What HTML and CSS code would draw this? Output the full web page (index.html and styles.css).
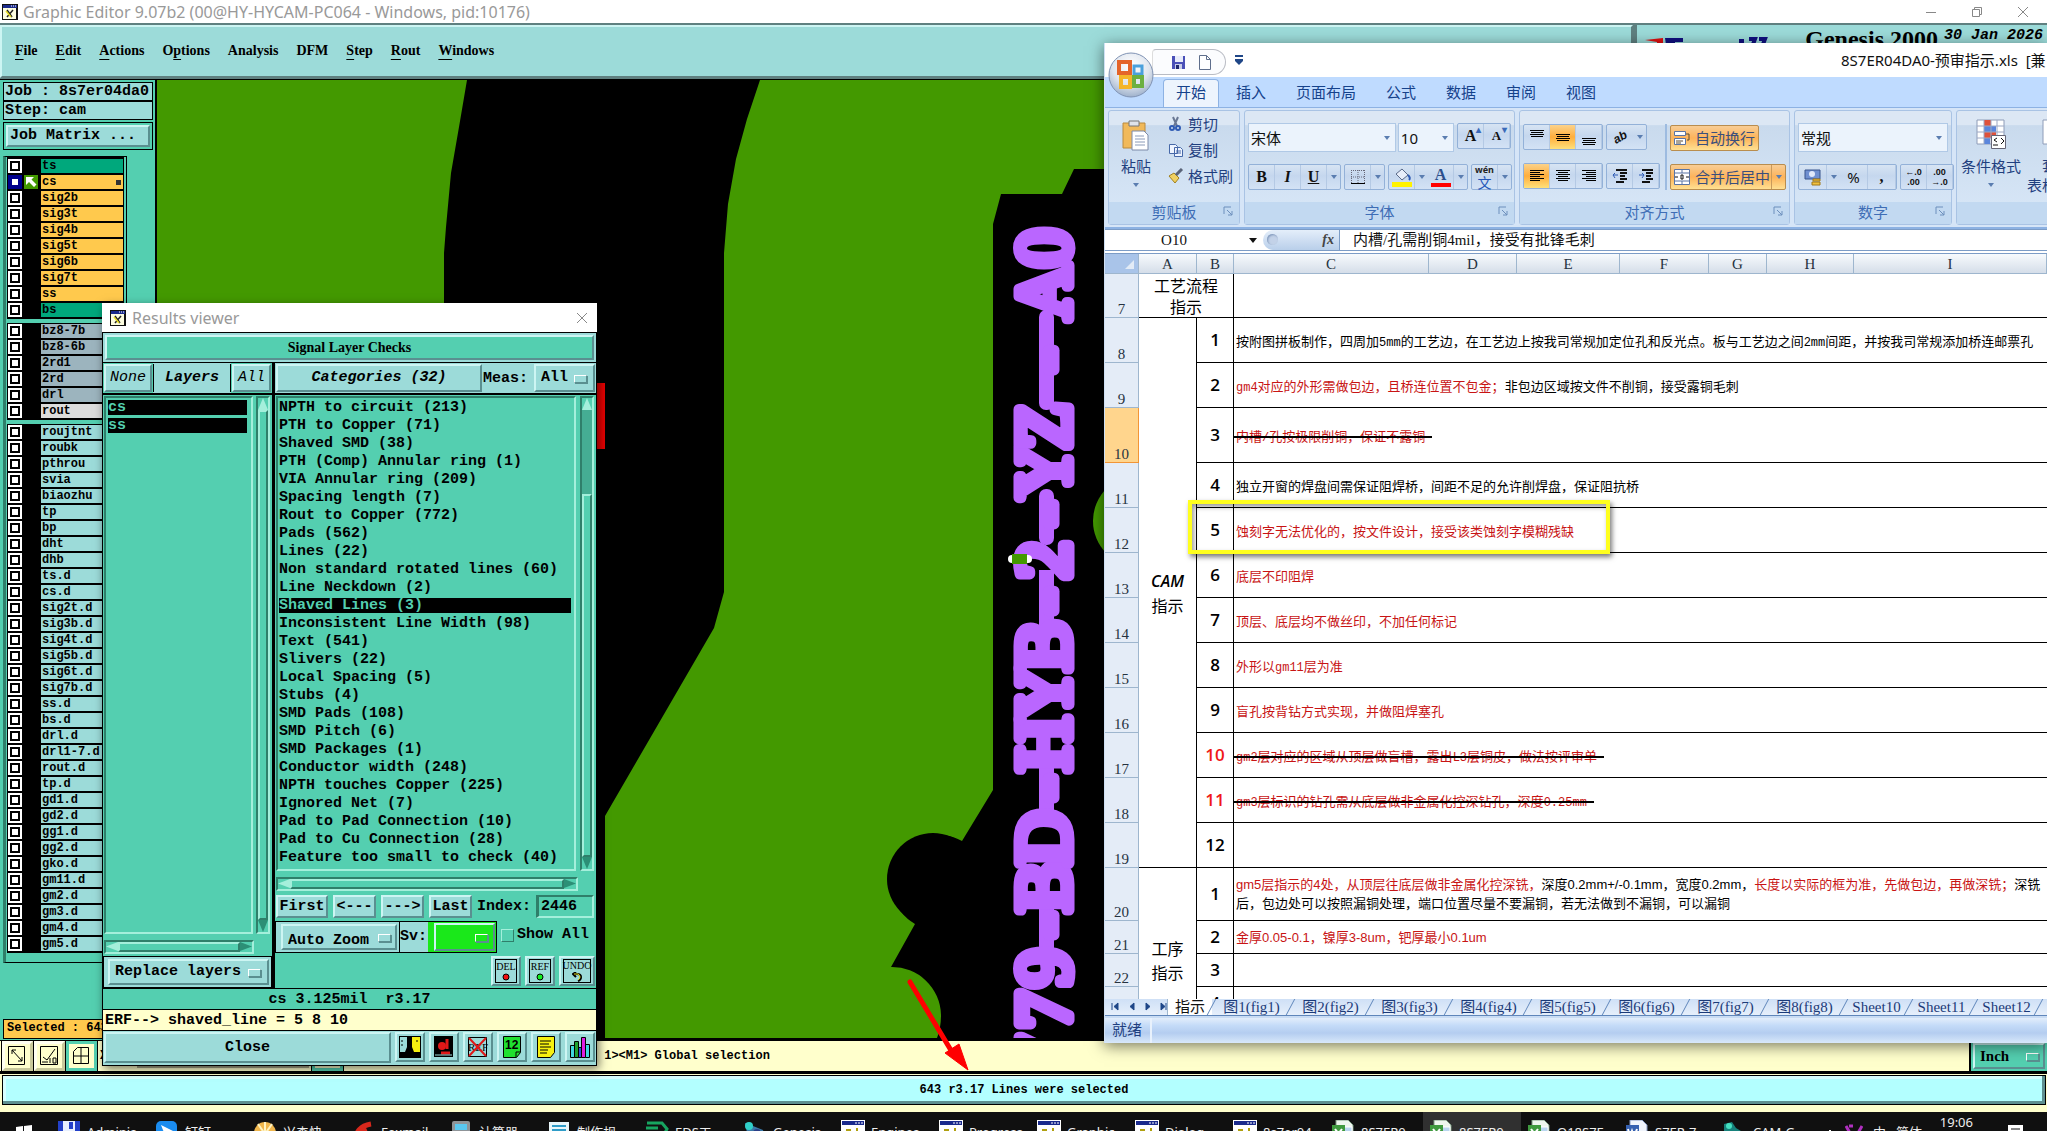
FILE: index.html
```html
<!DOCTYPE html>
<html lang="zh-CN">
<head>
<meta charset="utf-8">
<title>Graphic Editor</title>
<link rel="stylesheet" href="styles.css">
</head>
<body>
<svg width="0" height="0" class="defs">
  <symbol id="x11" viewBox="0 0 16 16"><rect width="16" height="16" fill="#111"/><rect x="1" y="1" width="14" height="3" fill="#1a2a8c"/><path d="M9 2h1M11 2h1M13 2h1" stroke="#fff"/><rect x="1" y="4" width="13" height="11" fill="#fdfde0"/><path d="M5 6l5 7M11 6l-6 7" stroke="#222" stroke-width="1.500"/><path d="M4 7l5 6" stroke="#e6dc20" stroke-width="1.500"/></symbol>
  <symbol id="pl" viewBox="0 0 24 24"><rect width="24" height="24" fill="#fff"/><rect x="1" y="1" width="22" height="4" fill="#1a2a8c"/><path d="M14 3h2M17 3h2M20 3h2" stroke="#fff"/><path d="M6 17V10h3v4H6M16 8v9" stroke="#b0a010" stroke-width="2" fill="none"/></symbol>
  <symbol id="xl" viewBox="0 0 24 24"><path d="M5 0h12l5 5v19H5z" fill="#eef6ee" stroke="#7a9a80"/><rect x="12" y="7" width="9" height="14" fill="#b9d6ef" stroke="#fff"/><rect x="1" y="5" width="13" height="16" fill="#3f9a3f"/><path d="M4 9l7 9M11 9l-7 9" stroke="#fff" stroke-width="2"/></symbol>
  <symbol id="launch" viewBox="0 0 12 12"><path d="M1 8V1h7" stroke="#6d8fbc" fill="none"/><path d="M4 4l5 5M9 5v4H5" stroke="#6d8fbc" fill="none"/></symbol>
  <symbol id="ll" viewBox="0 0 14 12"><path d="M0 .5h14M0 2.500h10M0 4.500h14M0 6.500h10M0 8.500h14M0 10.500h10" stroke="#000"/></symbol>
  <symbol id="lc" viewBox="0 0 14 12"><path d="M0 .5h14M2 2.500h10M0 4.500h14M2 6.500h10M0 8.500h14M2 10.500h10" stroke="#000"/></symbol>
  <symbol id="lr" viewBox="0 0 14 12"><path d="M0 .5h14M4 2.500h10M0 4.500h14M4 6.500h10M0 8.500h14M4 10.500h10" stroke="#000"/></symbol>
  <symbol id="lv" viewBox="0 0 14 7"><path d="M0 .5h14M1 2.500h12M0 4.500h14M1 6.500h12" stroke="#000"/></symbol>
</svg>
<div class="desk">
  <header class="titlebar">
    <svg class="i16"><use href="#x11"/></svg>
    <h1>Graphic Editor 9.07b2 (00@HY-HYCAM-PC064 - Windows, pid:10176)</h1>
    <div class="winbtns">
      <button aria-label="Minimize"><svg width="12" height="12"><path d="M1 6.500h10" stroke="#888"/></svg></button>
      <button aria-label="Restore"><svg width="12" height="12"><path d="M1.500 3.500h7v7h-7zM3.500 3V1.500h7v7H9" stroke="#888" fill="none"/></svg></button>
      <button aria-label="Close"><svg width="12" height="12"><path d="M1 1l10 10M11 1L1 11" stroke="#888"/></svg></button>
    </div>
  </header>

  <div class="menurow">
    <nav class="menubar">
      <button><u>F</u>ile</button><button><u>E</u>dit</button><button><u>A</u>ctions</button><button>O<u>p</u>tions</button><button>Analysis</button><button>DFM</button><button><u>S</u>tep</button><button><u>R</u>out</button><button><u>W</u>indows</button>
    </nav>
    <div class="brand">
      <svg width="130" height="30"><path d="M4 15l18-2v10h-6v-6z" fill="#e01010"/><path d="M24 13h18v4h-8v10h-8z" fill="#101080"/><path d="M98 16h5M108 14h6l-3 8M118 14h6l-3 8" stroke="#101080" stroke-width="4" fill="none"/></svg>
      <b>Genesis 2000</b><i>30 Jan 2026</i>
    </div>
  </div>

  <div class="main">
    <aside class="side">
      <div class="jobbox">Job : 8s7er04da0</div>
      <div class="jobbox">Step: cam</div>
      <div class="matrix"><button class="mbtn">Job Matrix ...</button></div>
      <div class="layers">
        <div class="lgroup">
          <label class="lr green"><input type="checkbox"><span>ts</span></label>
          <label class="lr gold work"><input type="checkbox" checked><svg width="14" height="14"><rect width="14" height="14" fill="#439900"/><path d="M2 2h8L7.500 4.500l5 5-2.500 2.500-5-5L2 10z" fill="#fff"/></svg><span>cs<em></em></span></label>
          <label class="lr gold"><input type="checkbox"><span>sig2b</span></label>
          <label class="lr gold"><input type="checkbox"><span>sig3t</span></label>
          <label class="lr gold"><input type="checkbox"><span>sig4b</span></label>
          <label class="lr gold"><input type="checkbox"><span>sig5t</span></label>
          <label class="lr gold"><input type="checkbox"><span>sig6b</span></label>
          <label class="lr gold"><input type="checkbox"><span>sig7t</span></label>
          <label class="lr gold"><input type="checkbox"><span>ss</span></label>
          <label class="lr green"><input type="checkbox"><span>bs</span></label>
        </div>
        <div class="lgroup">
          <label class="lr gray"><input type="checkbox"><span>bz8-7b</span></label>
          <label class="lr gray"><input type="checkbox"><span>bz8-6b</span></label>
          <label class="lr gray"><input type="checkbox"><span>2rd1</span></label>
          <label class="lr gray"><input type="checkbox"><span>2rd</span></label>
          <label class="lr gray"><input type="checkbox"><span>drl</span></label>
          <label class="lr pale"><input type="checkbox"><span>rout</span></label>
        </div>
        <div class="lgroup">
          <label class="lr"><input type="checkbox"><span>roujtnt</span></label>
          <label class="lr"><input type="checkbox"><span>roubk</span></label>
          <label class="lr"><input type="checkbox"><span>pthrou</span></label>
          <label class="lr"><input type="checkbox"><span>svia</span></label>
          <label class="lr"><input type="checkbox"><span>biaozhu</span></label>
          <label class="lr"><input type="checkbox"><span>tp</span></label>
          <label class="lr"><input type="checkbox"><span>bp</span></label>
          <label class="lr"><input type="checkbox"><span>dht</span></label>
          <label class="lr"><input type="checkbox"><span>dhb</span></label>
          <label class="lr"><input type="checkbox"><span>ts.d</span></label>
          <label class="lr"><input type="checkbox"><span>cs.d</span></label>
          <label class="lr"><input type="checkbox"><span>sig2t.d</span></label>
          <label class="lr"><input type="checkbox"><span>sig3b.d</span></label>
          <label class="lr"><input type="checkbox"><span>sig4t.d</span></label>
          <label class="lr"><input type="checkbox"><span>sig5b.d</span></label>
          <label class="lr"><input type="checkbox"><span>sig6t.d</span></label>
          <label class="lr"><input type="checkbox"><span>sig7b.d</span></label>
          <label class="lr"><input type="checkbox"><span>ss.d</span></label>
          <label class="lr"><input type="checkbox"><span>bs.d</span></label>
          <label class="lr"><input type="checkbox"><span>drl.d</span></label>
          <label class="lr"><input type="checkbox"><span>drl1-7.d</span></label>
          <label class="lr"><input type="checkbox"><span>rout.d</span></label>
          <label class="lr"><input type="checkbox"><span>tp.d</span></label>
          <label class="lr"><input type="checkbox"><span>gd1.d</span></label>
          <label class="lr"><input type="checkbox"><span>gd2.d</span></label>
          <label class="lr"><input type="checkbox"><span>gg1.d</span></label>
          <label class="lr"><input type="checkbox"><span>gg2.d</span></label>
          <label class="lr"><input type="checkbox"><span>gko.d</span></label>
          <label class="lr"><input type="checkbox"><span>gm11.d</span></label>
          <label class="lr"><input type="checkbox"><span>gm2.d</span></label>
          <label class="lr"><input type="checkbox"><span>gm3.d</span></label>
          <label class="lr"><input type="checkbox"><span>gm4.d</span></label>
          <label class="lr"><input type="checkbox"><span>gm5.d</span></label>
        </div>
      </div>
      <div class="selcount">Selected : 643</div>
    </aside>
    <div class="canvas">
      <svg width="1890" height="958" viewBox="157 80 1890 958">
        <path d="M157 80H467L459 127 451 173 446 227 444 253V700H157z" fill="#439900"/>
        <rect x="590" y="383" width="15" height="66" fill="#e80000"/>
        <path d="M760 80L747 119 736 159 728 204 724 253V592L714 628 605 816V1038H937Q941 1028 941 1015A49 49 0 0 0 891 967L915 924A46 46 0 1 1 962 841L993 790V224L1001 194H1062L1074 169H1200V80z" fill="#439900"/>
        <circle cx="933" cy="879" r="46"/>
        <circle cx="1139" cy="521" r="46" fill="#439900"/>
        <g fill="#ba66ff"><rect x="1039" y="310" width="15" height="100" rx="7"/><rect x="1039" y="489" width="15" height="56" rx="7"/><rect x="1039" y="570" width="15" height="60"/><rect x="1039" y="762" width="15" height="55"/><rect x="1039" y="900" width="15" height="50"/></g>
        <text class="etch" transform="translate(1069 1038) rotate(-90)" x="-16 28 70 113 151 200 250 294 345 392 437 478 524 567 612 678 746 790">779-BD-HYB-2-YZ-A0</text>
        <rect x="1008" y="555" width="24" height="8" rx="4" fill="#fff"/><rect x="1012" y="554" width="15" height="10" fill="#439900"/>
      </svg>
    </div>
  </div>

  <div class="cmdbar">
    <button class="tool"><svg width="22" height="22"><path d="M1.500 1.500h16v18h-16zM5 5l10 11M5 9V5h4M15 12v4h-4" fill="none" stroke="#000"/></svg></button>
    <button class="tool"><svg width="22" height="22"><path d="M1.500 1.500h17v18h-17zM4 12l4 3L16 4M3 17h6M11 13v5M14 13h3v5h-3z" fill="none" stroke="#000"/></svg></button>
    <button class="tool on"><svg width="22" height="22"><path d="M2.500 6.500l4-4h11v16h-15zM2 11h16M10 2v17" fill="none" stroke="#000"/></svg></button>
    <label class="xy">X <input aria-label="X Y"></label>
    <button class="tool on wide" aria-label="Grid"></button>
    <span class="hint">1&gt;&lt;M1&gt; Global selection</span>
    <span class="opt inch"><select aria-label="Units"><option>Inch</option></select></span>
  </div>
  <div class="status"><p>643 r3.17 Lines were selected</p></div>

  <footer class="taskbar"><div class="tasks">
    <button class="start" aria-label="Start"><svg width="18" height="18"><path d="M1 4l7-1v6H1zM9 3l8-1v7H9zM1 10h7v6l-7-1zM9 10h8v7l-8-1z" fill="#fff"/></svg></button>
    <button><svg width="24" height="24"><path d="M1 1h22v22H1z" fill="#2340c8"/><path d="M6 1h12v10H6z" fill="#e8f0ff"/><path d="M12 2h4v7h-4z" fill="#2340c8"/></svg>Adminis</button>
    <button><svg width="24" height="24"><rect x="1" y="1" width="21" height="22" rx="5" fill="#1a8cf0"/><path d="M6 5l12 6-5 8-3-4z" fill="#fff"/></svg>钉钉</button>
    <button><svg width="24" height="24"><circle cx="12" cy="13" r="11" fill="#f0b64c"/><path d="M12 14L5 4M12 14V2M12 14l7-10" stroke="#fff3c0" stroke-width="2"/></svg>兴森快</button>
    <button><svg width="24" height="24"><path d="M2 22c4-10 6-16 18-18M6 14l10-4" stroke="#d8281c" stroke-width="5" fill="none"/></svg>Foxmail</button>
    <button><svg width="24" height="24"><rect x="3" y="1" width="18" height="22" rx="2" fill="#8f9498"/><rect x="6" y="4" width="12" height="6" fill="#5ac8f0"/><path d="M6 13h12M6 17h12" stroke="#fff" stroke-width="2" stroke-dasharray="3 2"/></svg>计算器</button>
    <button><svg width="24" height="24"><path d="M2 2h20v21H2z" fill="#e8f6fa"/><path d="M5 6h14M5 10h14M5 14h14" stroke="#2f9cc8" stroke-width="2"/></svg>制作规</button>
    <button><svg width="24" height="24"><path d="M2 3h15l5 6-4 7H7M1 8h12M5 13h8" stroke="#17a560" stroke-width="3" fill="none"/></svg>EDS工</button>
    <button><svg width="24" height="24"><path d="M2 3l8 3 10 4 3 12H6z" fill="#3b7aa8"/><circle cx="6" cy="6" r="4" fill="#30d0c8"/><circle cx="14" cy="13" r="4" fill="#2c3f88"/></svg>Genesis</button>
    <button><svg class="i24"><use href="#pl"/></svg>Engines</button>
    <button><svg class="i24"><use href="#pl"/></svg>Progress</button>
    <button><svg class="i24"><use href="#pl"/></svg>Graphic</button>
    <button><svg class="i24"><use href="#pl"/></svg>Dialog</button>
    <button><svg class="i24"><use href="#pl"/></svg>8s7er04</button>
    <button><svg class="i24"><use href="#xl"/></svg>8S7ER0</button>
    <button class="cur"><svg class="i24"><use href="#xl"/></svg>8S7ER0</button>
    <button><svg class="i24"><use href="#xl"/></svg>Q18S7E</button>
    <button><svg width="24" height="24"><path d="M5 0h12l5 5v19H5z" fill="#f0f4fc" stroke="#8296c0"/><rect x="1" y="5" width="13" height="16" fill="#3560b0"/><path d="M3 9l2 8 2-6 2 6 3-8" stroke="#fff" fill="none" stroke-width="2"/></svg>S7ER-7</button>
    <button><svg width="24" height="24"><path d="M1 4l8-2 4 6 10 6-2 9H6L1 12z" fill="#17827c"/><circle cx="6" cy="6" r="3" fill="#44e0c0"/></svg>CAM-G</button>
    <div class="tray"><svg width="10" height="8"><path d="M1 6l4-4 4 4" stroke="#fff" fill="none"/></svg><svg width="18" height="18"><path d="M1 3l8 14 8-14M4 3h4" stroke="#b030c0" stroke-width="3" fill="none"/></svg><span>中</span><span>简体</span></div>
    <time>19:06</time>
    <svg class="note" width="18" height="18"><path d="M1 2h15v13H1z" fill="#fff"/><path d="M4 6h9M4 9h9" stroke="#111"/></svg>
  </div></footer>

  <section class="results">
    <header><svg class="i16"><use href="#x11"/></svg><h2>Results viewer</h2><button aria-label="Close window"><svg width="12" height="12"><path d="M1 1l10 10M11 1L1 11" stroke="#888"/></svg></button></header>
    <div class="rbody">
      <div class="banner"><button class="mbtn teal">Signal Layer Checks</button></div>
      <div class="cols">
        <div class="colL">
          <div class="hd"><button class="mbtn it">None</button><b>Layers</b><button class="mbtn it">All</button></div>
          <div class="scroll">
            <ul class="list"><li class="sel">cs</li><li class="sel">ss</li></ul>
            <div class="vs"><i class="up"></i><i class="bar"></i><i class="dn"></i></div>
          </div>
          <div class="hs"><i class="lf"></i><i class="bar"></i><i class="rt"></i></div>
          <div class="rep"><span class="opt"><select aria-label="Replace layers"><option>Replace layers</option></select></span></div>
        </div>
        <div class="colR">
          <div class="hd"><button class="mbtn cat">Categories (32)</button><label for="meas">Meas:</label><span class="opt"><select id="meas"><option>All</option></select></span></div>
          <div class="scroll">
            <ul class="list"><li>NPTH to circuit (213)</li><li>PTH to Copper (71)</li><li>Shaved SMD (38)</li><li>PTH (Comp) Annular ring (1)</li><li>VIA Annular ring (209)</li><li>Spacing length (7)</li><li>Rout to Copper (772)</li><li>Pads (562)</li><li>Lines (22)</li><li>Non standard rotated lines (60)</li><li>Line Neckdown (2)</li><li class="sel">Shaved Lines (3)</li><li>Inconsistent Line Width (98)</li><li>Text (541)</li><li>Slivers (22)</li><li>Local Spacing (5)</li><li>Stubs (4)</li><li>SMD Pads (108)</li><li>SMD Pitch (6)</li><li>SMD Packages (1)</li><li>Conductor width (248)</li><li>NPTH touches Copper (225)</li><li>Ignored Net (7)</li><li>Pad to Pad Connection (10)</li><li>Pad to Cu Connection (28)</li><li>Feature too small to check (40)</li></ul>
            <div class="vs"><i class="up"></i><i class="gapbar"></i><i class="bar"></i><i class="dn"></i></div>
          </div>
          <div class="hs"><i class="lf"></i><i class="bar"></i><i class="rt"></i></div>
          <div class="navrow"><button class="mbtn">First</button><button class="mbtn">&lt;---</button><button class="mbtn">---&gt;</button><button class="mbtn">Last</button><label for="idx">Index:</label><input id="idx" value="2446"></div>
          <div class="zoomrow"><span class="opt az"><select aria-label="Zoom mode"><option>Auto Zoom</option></select></span><label for="sv">Sv:</label><span class="opt sv"><select id="sv"><option></option></select></span><label class="show"><input type="checkbox">Show All</label></div>
          <div class="undo">
            <button class="mbtn ic"><span>DEL</span><svg width="8" height="8"><circle cx="4" cy="4" r="3" fill="#f01010" stroke="#000"/></svg></button>
            <button class="mbtn ic"><span>REF</span><svg width="8" height="8"><circle cx="4" cy="4" r="3" fill="#10f020" stroke="#000"/></svg></button>
            <button class="mbtn ic"><span>UNDO</span><svg width="10" height="10"><path d="M1 2h4q4 0 4 3t-3 4M4 0L1 2l3 3" stroke="#000" stroke-width="2" fill="none"/><path d="M2 2h4q2 1 2 3t-2 3" stroke="#e8e020" fill="none"/></svg></button>
          </div>
        </div>
      </div>
      <p class="info">cs 3.125mil&nbsp; r3.17</p>
      <p class="erf">ERF--&gt; shaved_line = 5 8 10</p>
      <div class="foot">
        <button class="mbtn close">Close</button>
        <button class="mbtn ic"><svg width="22" height="24"><path d="M0 1h22v22H0z"/><path d="M1 2h7v10l-2 5H1z" fill="#9cdbd9"/><path d="M13 2h8v15h-6l-2-5z" fill="#f6f010"/><path d="M3 5v2M3 9v2M18 5v2" stroke="#000"/></svg></button>
        <button class="mbtn ic"><svg width="22" height="24"><path d="M1 1h19v21H1z"/><path d="M14 4v10M8 18h9" stroke="#e01818" stroke-width="3"/><circle cx="9" cy="11" r="4" fill="#e01818"/><path d="M2 20h17" stroke="#9cdbd9"/></svg></button>
        <button class="mbtn ic"><span>REF</span><svg class="over" width="22" height="24"><path d="M1.500 2.500h18v19h-18z" stroke="#000" fill="none"/><path d="M2 3l17 18M19 3L2 21" stroke="#e01818" stroke-width="2"/></svg></button>
        <button class="mbtn ic"><svg width="22" height="24"><path d="M2.500 1.500h17v16l-4 5h-13z" fill="#20e030" stroke="#000"/><path d="M19 17h-4v5" fill="none" stroke="#000"/></svg><span class="over num">12</span></button>
        <button class="mbtn ic"><svg width="22" height="24"><path d="M2.500 1.500h17v16l-4 5h-13z" fill="#f6f010" stroke="#000"/><path d="M5 6h11M5 9h9M5 12h11M5 15h8M5 18h7" stroke="#000"/></svg></button>
        <button class="mbtn ic"><svg width="22" height="24"><path d="M1.500 10.500h4v12h-4z" fill="#40d8e0" stroke="#000"/><path d="M5.500 6.500h4v16h-4z" fill="#20a030" stroke="#000"/><path d="M9.500 12.500h4v10h-4z" fill="#3050e0" stroke="#000"/><path d="M12.500 2.500h4v20h-4z" fill="#e020e0" stroke="#000"/><path d="M16.500 9.500h4v13h-4z" fill="#40d8e0" stroke="#000"/></svg></button>
      </div>
    </div>
  </section>

  <section class="excel">
    <header class="xt">
      <button class="orb" aria-label="Office"><svg width="48" height="48"><defs><radialGradient id="og" cx=".5" cy=".3" r=".7"><stop offset="0" stop-color="#fff"/><stop offset=".6" stop-color="#dfe5ee"/><stop offset="1" stop-color="#9fb2cc"/></radialGradient></defs><circle cx="24" cy="24" r="22" fill="url(#og)" stroke="#8093b4"/><path d="M12 11h11v11H12z" fill="none" stroke="#e4642a" stroke-width="4"/><path d="M27 15h8v8h-8z" fill="none" stroke="#4aa0dc" stroke-width="3"/><path d="M14 26h9v10h-9z" fill="none" stroke="#f4b52a" stroke-width="4"/><path d="M27 26h8v9h-8z" fill="none" stroke="#6cb040" stroke-width="4"/></svg></button>
      <div class="qat"><button aria-label="Save"><svg width="15" height="15"><path d="M1 1h13v13H1z" fill="#4a50b8"/><path d="M4 1h8v6H4z" fill="#e8ecfa"/><path d="M4 9h7v5H4z" fill="#c8cde8"/><path d="M5 10h3v4H5z" fill="#202870"/></svg></button><button aria-label="New"><svg width="15" height="15"><path d="M2.500.5h7l4 4v10h-11z" fill="#fdfeff" stroke="#5e6e8c"/><path d="M9.500.5v4h4" fill="none" stroke="#5e6e8c"/></svg></button></div>
      <svg width="10" height="12"><path d="M1 2h8" stroke="#1f4687" stroke-width="2"/><path d="M1 5h8v2L5 11 1 7z" fill="#1f4687"/></svg>
      <h2>8S7ER04DA0-预审指示.xls&nbsp; [兼</h2>
    </header>
    <nav class="tabs"><button class="on">开始</button><button>插入</button><button>页面布局</button><button>公式</button><button>数据</button><button>审阅</button><button>视图</button></nav>
    <div class="ribbon">
      <div class="rg g1"><div class="rc">
        <button class="big"><svg width="30" height="32"><path d="M2 4h22v25H2z" fill="#f1b95a" stroke="#b98a3e"/><path d="M8 2h10v5H8z" fill="#dfe3ea" stroke="#777"/><path d="M11 12h12l4 4v15H11z" fill="#fff" stroke="#7c8aa8"/><path d="M14 17h9M14 20h10M14 23h10M14 26h10" stroke="#8a9ab8"/></svg>粘贴<i class="dd"></i></button>
        <div class="clip">
          <button><svg width="16" height="16"><path d="M5 1l4 9M10 1L6 10" stroke="#6a7894" stroke-width="2"/><circle cx="4" cy="12" r="2" fill="none" stroke="#2f5bb4" stroke-width="2"/><circle cx="10" cy="12" r="2" fill="none" stroke="#2f5bb4" stroke-width="2"/></svg>剪切</button>
          <button><svg width="16" height="16"><path d="M1.500 2.500h6l2 2v7h-8zM6.500 5.500h6l2 2v7h-8z" fill="#eef4ff" stroke="#4668a8"/><path d="M8 9h5M8 11h5" stroke="#4668a8"/></svg>复制</button>
          <button><svg width="16" height="16"><path d="M1 8l5-3 5 5-4 5z" fill="#f0d060" stroke="#a08020"/><path d="M8 7l6-6" stroke="#5a6478" stroke-width="3"/></svg>格式刷</button>
        </div></div><h3>剪贴板<svg class="la"><use href="#launch"/></svg></h3></div>
      <div class="rg g2"><div class="rc col">
        <div class="row"><span class="xs w150"><select aria-label="字体"><option>宋体</option></select></span><span class="xs w56"><select aria-label="字号"><option>10</option></select></span><span class="bg ml"><button class="sf">A<sup>▴</sup></button><button class="sf sm">A<sup>▾</sup></button></span></div>
        <div class="row"><span class="bg"><button class="sf">B</button><button class="sf itl">I</button><button class="sf"><u>U</u></button><i class="dd"></i></span>
          <span class="bg"><button aria-label="边框"><svg width="16" height="16"><path d="M1.500 1v13M8 1v13M14.500 1v13M1 1.500h14M1 8h14" stroke="#667" stroke-dasharray="1 1"/><path d="M1 14.500h14" stroke="#000"/></svg></button><i class="dd"></i></span>
          <span class="bg"><button aria-label="填充颜色"><svg width="20" height="20"><path d="M4 7l6-5 6 6-6 5z" fill="#e8eefa" stroke="#5a6a88"/><path d="M16 8q3 3 1 5" stroke="#2f5bb4" stroke-width="2" fill="none"/><path d="M0 15h20v5H0z" fill="#fff200"/></svg></button><i class="dd"></i><button class="fc" aria-label="字体颜色"><span>A</span></button><i class="dd"></i></span>
          <span class="bg"><button class="wen"><small>wén</small>文</button><i class="dd"></i></span></div>
        </div><h3>字体<svg class="la"><use href="#launch"/></svg></h3></div>
      <div class="rg g3"><div class="rc">
        <div class="al">
          <div class="row"><span class="bg"><button aria-label="顶端对齐"><svg class="lv t"><use href="#lv"/></svg></button><button class="hot" aria-label="垂直居中"><svg class="lv"><use href="#lv"/></svg></button><button aria-label="底端对齐"><svg class="lv b"><use href="#lv"/></svg></button></span><span class="bg"><button class="ab">ab</button><i class="dd"></i></span></div>
          <div class="row"><span class="bg"><button class="hot" aria-label="左对齐"><svg width="14" height="12"><use href="#ll"/></svg></button><button aria-label="居中"><svg width="14" height="12"><use href="#lc"/></svg></button><button aria-label="右对齐"><svg width="14" height="12"><use href="#lr"/></svg></button></span><span class="bg"><button aria-label="减少缩进"><svg width="16" height="14"><path d="M4 1h11M8 4h7M8 7h5M8 10h7M4 13h8" stroke="#111" stroke-width="2"/><path d="M6 6H1M3 4L1 6l2 3" stroke="#2f5bb4" fill="none"/></svg></button><button aria-label="增加缩进"><svg width="16" height="14"><path d="M4 1h11M8 4h7M8 7h5M8 10h7M4 13h8" stroke="#111" stroke-width="2"/><path d="M1 6h5M4 4l2 2-2 3" stroke="#2f5bb4" fill="none"/></svg></button></span></div>
        </div>
        <div class="wm">
          <button class="hb"><svg width="16" height="16"><path d="M.5 1.500h11v4H.5zM.5 8.500h11v6H.5z" fill="#fff" stroke="#5a74a4"/><path d="M2 11h7M2 13h5M12 4h3v6h-2" stroke="#5a4a30" fill="none"/></svg>自动换行</button>
          <span class="hb"><button><svg width="16" height="16"><path d="M.5.5h15v15H.5zM0 4h16M0 12h16M8 0v4M8 12v4" fill="#fff" stroke="#5a74a4"/><path d="M1 8h3M12 8h3M7 6h2v4H7z" stroke="#111" fill="none"/></svg>合并后居中</button><i class="dd"></i></span>
        </div></div><h3>对齐方式<svg class="la"><use href="#launch"/></svg></h3></div>
      <div class="rg g4"><div class="rc col">
        <div class="row"><span class="xs w150"><select aria-label="数字格式"><option>常规</option></select></span></div>
        <div class="row"><span class="bg"><button aria-label="会计格式"><svg width="18" height="18"><path d="M1 2h15v9H1z" fill="#6f8fd0" stroke="#38558c"/><circle cx="8" cy="6" r="3" fill="#dfe8fa"/><path d="M9 11h7v2H9zM8 14h8v3H8z" fill="#f0c040" stroke="#a07818"/></svg></button><i class="dd"></i><button>%</button><button class="sf">,</button></span><span class="bg"><button class="dec">←.0<br>.00</button><button class="dec">.00<br>→.0</button></span></div>
        </div><h3>数字<svg class="la"><use href="#launch"/></svg></h3></div>
      <div class="rg g5"><div class="rc">
        <button class="big"><svg width="30" height="32"><path d="M1 1h27v24H1z" fill="#fff" stroke="#8e9cb8"/><path d="M8 1h7v6H8zM8 13h12v6H8z" fill="#e0513a"/><path d="M8 7h12v6H8zM8 19h6v6H8z" fill="#5b86dc"/><path d="M1 7h27M1 13h27M1 19h27M8 1v24M15 1v24M21 1v24" stroke="#9ca8c4"/><path d="M15.500 16.500h14v13h-14z" fill="#fff" stroke="#667"/><path d="M21 19l-3 2 3 2M17 26h5M25 19l3 3-3 3" stroke="#111" fill="none"/></svg>条件格式<i class="dd"></i></button>
        <button class="big fmt"><svg width="30" height="32"><path d="M1 1h27v24H1z" fill="#fff" stroke="#8e9cb8"/></svg><span>套用<br>表格格式</span></button>
        </div><h3></h3></div>
    </div>
    <div class="fbar"><input class="nb" aria-label="名称框" value="O10"><i class="dd blk"></i><div class="fx"><i class="knob"></i>fx</div><input class="fi" aria-label="编辑栏" value="内槽/孔需削铜4mil，接受有批锋毛刺"></div>
    <div class="grid">
      <table>
        <colgroup><col class="c0"><col class="ca"><col class="cb"><col class="cc"><col class="cd"><col class="ce"><col class="cf"><col class="cg"><col class="ch"><col></colgroup>
        <thead><tr><th class="corner"></th><th>A</th><th>B</th><th>C</th><th>D</th><th>E</th><th>F</th><th>G</th><th>H</th><th>I</th></tr></thead>
        <tbody>
          <tr class="r44"><th>7</th><td colspan="2" class="proc">工艺流程<br>指示</td><td colspan="7"></td></tr>
          <tr class="r45"><th>8</th><td rowspan="12" class="mg"><i>CAM</i><br>指示</td><td class="n">1</td><td colspan="7">按附图拼板制作，四周加<s>5mm</s>的工艺边，在工艺边上按我司常规加定位孔和反光点。板与工艺边之间<s>2mm</s>间距，并按我司常规添加桥连邮票孔</td></tr>
          <tr class="r45"><th>9</th><td class="n">2</td><td colspan="7"><em><s>gm4</s>对应的外形需做包边，且桥连位置不包金；</em>非包边区域按文件不削铜，接受露铜毛刺</td></tr>
          <tr class="r55"><th class="cur">10</th><td class="n">3</td><td colspan="7"><em class="cut">内槽<s>/</s>孔按极限削铜，保证不露铜</em></td></tr>
          <tr class="r45"><th>11</th><td class="n">4</td><td colspan="7">独立开窗的焊盘间需保证阻焊桥，间距不足的允许削焊盘，保证阻抗桥</td></tr>
          <tr class="r45"><th>12</th><td class="n">5</td><td colspan="7"><span class="hl"></span><em>蚀刻字无法优化的，按文件设计，接受该类蚀刻字模糊残缺</em></td></tr>
          <tr class="r45"><th>13</th><td class="n">6</td><td colspan="7"><em>底层不印阻焊</em></td></tr>
          <tr class="r45"><th>14</th><td class="n">7</td><td colspan="7"><em>顶层、底层均不做丝印，不加任何标记</em></td></tr>
          <tr class="r45"><th>15</th><td class="n">8</td><td colspan="7"><em>外形以<s>gm11</s>层为准</em></td></tr>
          <tr class="r45"><th>16</th><td class="n">9</td><td colspan="7"><em>盲孔按背钻方式实现，并做阻焊塞孔</em></td></tr>
          <tr class="r45"><th>17</th><td class="n red">10</td><td colspan="7"><em class="cut"><s>gm2</s>层对应的区域从顶层做盲槽，露出<s>L3</s>层铜皮，做法按评审单</em></td></tr>
          <tr class="r45"><th>18</th><td class="n red">11</td><td colspan="7"><em class="cut"><s>gm3</s>层标识的钻孔需从底层做非金属化控深钻孔，深度<s>0.25mm</s></em></td></tr>
          <tr class="r45"><th>19</th><td class="n">12</td><td colspan="7"></td></tr>
          <tr class="r53"><th>20</th><td rowspan="5" class="mg">工序<br>指示</td><td class="n">1</td><td colspan="7" class="os"><em>gm5层指示的4处，从顶层往底层做非金属化控深铣，</em>深度0.2mm+/-0.1mm，宽度0.2mm，<em>长度以实际的框为准，先做包边，再做深铣；</em>深铣<br>后，包边处可以按照漏铜处理，端口位置尽量不要漏铜，若无法做到不漏铜，可以漏铜</td></tr>
          <tr class="r33"><th>21</th><td class="n">2</td><td colspan="7" class="os"><em>金厚0.05-0.1，镍厚3-8um，钯厚最小0.1um</em></td></tr>
          <tr class="r33"><th>22</th><td class="n">3</td><td colspan="7"></td></tr>
          <tr class="r33"><th>23</th><td class="n">4</td><td colspan="7"></td></tr>
          <tr class="r33"><th>24</th><td class="n"></td><td colspan="7"></td></tr>
        </tbody>
      </table>
    </div>
    <div class="sheets"><span class="nav"><svg width="63" height="14"><path d="M7 4v7M13 4v7l-4-3.500zM29 4v7l-4-3.500zM41 4v7l4-3.500zM56 4v7l4-3.500zM61 4v7" fill="#1f4687" stroke="#1f4687"/></svg></span><a href="#" class="on">指示</a><a href="#" class="fig">图1(fig1)</a><a href="#" class="fig">图2(fig2)</a><a href="#" class="fig">图3(fig3)</a><a href="#" class="fig">图4(fig4)</a><a href="#" class="fig">图5(fig5)</a><a href="#" class="fig">图6(fig6)</a><a href="#" class="fig">图7(fig7)</a><a href="#" class="fig">图8(fig8)</a><a href="#" class="sh">Sheet10</a><a href="#" class="sh">Sheet11</a><a href="#" class="sh">Sheet12</a></div>
    <div class="xstat"><span>就绪</span></div>
  </section>

  <svg class="arrow" width="70" height="100"><path d="M6 6l42 70" stroke="#f00" stroke-width="5" stroke-linecap="round"/><path d="M41 77l14-9 9 26z" fill="#f00" stroke="#f00" stroke-linejoin="round"/></svg>
</div>
</body>
</html>
```
FILE: styles.css
```css
:root{--aqua:#9cdbd9;--hi:#cdf5f3;--lo:#5a8f90;--teal:#54cfb0;--thi:#a4efdb;--tlo:#2f7f6a;--cream:#ffffcc;
--mono:"Liberation Mono","Noto Sans CJK SC",monospace;--ui:"Noto Sans","Noto Sans CJK SC",sans-serif;--song:"Liberation Serif","Noto Sans CJK SC",serif;--blue:#1f3f7f}
*{box-sizing:border-box}
body{margin:0;height:100vh;overflow:hidden;font:bold 15px/18px var(--mono);color:#000}
button,input,select{font:inherit;color:inherit;margin:0;padding:0;border:0;background:none;border-radius:0;appearance:none}
h1,h2,h3,p,ul{margin:0;padding:0}
li{list-style:none}
svg{flex:none;display:block}
.defs{position:absolute}
.i16{width:16px;height:16px}
.i24{width:24px;height:24px}
.desk{position:relative;height:100%;display:flex;flex-direction:column;overflow:hidden;background:#000}
.titlebar{height:23px;background:#fff;display:flex;align-items:center;gap:5px;padding:0 18px 0 2px}
.titlebar h1,.results h2{font:16px/22px var(--ui);color:#999;flex:1}
.winbtns{display:flex;gap:34px}
.menurow{height:57px;display:flex;gap:4px;background:#5f8080;padding:2px 0 1px;border-bottom:1px solid #000}
.menubar{flex:1;background:var(--aqua);border:2px solid;border-color:var(--hi) #5f8080 #5f8080 var(--hi);display:flex;align-items:center;gap:18px;padding:0 0 2px 13px;font:bold 14px/20px "Liberation Serif",serif}
.menubar u{text-underline-offset:4px}
.brand{width:410px;background:var(--aqua);display:flex;padding:0 4px 0 4px}
.brand b{font:bold 24px/28px "Liberation Serif",serif;margin-left:auto;margin-right:6px}
.brand i{line-height:22px}
.main{flex:1;display:flex;min-height:0}
.side{width:157px;background:var(--teal);border-right:2px solid #000;padding:2px 2px 1px 3px;display:flex;flex-direction:column}
.jobbox{height:19px;border:1px solid #000;background:var(--aqua);padding-left:1px;width:150px;line-height:18px;white-space:nowrap}
.matrix{border:1px solid #000;margin:2px 0 6px;width:150px;padding:2px}
.mbtn{background:var(--aqua);border:2px solid;border-color:var(--hi) var(--lo) var(--lo) var(--hi)}
.matrix .mbtn{width:100%;height:22px;text-align:left;padding-left:2px}
.layers{width:124px;border:1px solid #000;border-left:3px solid var(--tlo);padding:0 2px 9px 1px;display:flex;flex-direction:column;gap:4px}
.lgroup{background:#000;padding:1px;display:flex;flex-direction:column}
.lgroup:nth-child(n+2){padding-top:0}
.lr{height:16px;display:grid;grid-template-columns:14px 19px 1fr;font-size:12px;line-height:14px;align-items:center}
.lr input{width:14px;height:14px;background:#fff;border:2px solid #fff;box-shadow:inset 0 0 0 2px #000}
.lr.work input{background:#fff;border-color:#00008c;box-shadow:inset 0 0 0 2px #00008c}
.lr svg{margin-left:2px}
.lr span{grid-column:3;height:14px;background:var(--aqua);padding-left:1px;position:relative}
.green span{background:#00a87c}.gold span{background:#ffc94d}.gray span{background:#9cb4be}.pale span{background:#dcdcdc}
.lr em{position:absolute;right:2px;top:5px;width:5px;height:5px;background:#333}
.selcount{margin-top:auto;height:20px;border:1px solid #000;background:#ffc94d;font-size:12px;line-height:17px;padding-left:3px}
.canvas{flex:1;overflow:hidden;min-width:0;background:#000}
.etch{font:76px "Liberation Serif",serif;text-anchor:middle;fill:#ba66ff;stroke:#ba66ff;stroke-width:11px;stroke-linejoin:round}
.cmdbar{height:34px;background:var(--cream);border-bottom:3px solid #000;border-top:1px solid #000;display:flex;align-items:center;gap:1px;padding-left:2px}
.tool{width:31px;height:30px;border:3px solid;border-color:#fffff0 #c8c89a #c8c89a #fffff0;outline:1px solid #000;display:grid;place-items:center;overflow:hidden}
.tool.on{border-color:var(--teal);background:var(--cream)}
.xy{display:flex;gap:30px;height:30px;align-items:center;padding-left:2px;margin-right:2px;font-size:12px}
.xy input{width:172px;height:24px;border:2px solid #a8a88a;background:var(--cream)}
.hint{font-size:12px;margin-left:260px;flex:1}
.opt{position:relative;display:flex;background:var(--aqua)}
.opt select{width:100%;background:transparent;border:2px solid;border-color:var(--hi) var(--lo) var(--lo) var(--hi);padding-left:5px}
.opt::after{content:"";position:absolute;right:8px;top:50%;width:11px;height:6px;margin-top:-3px;border:1px solid;border-color:#fff var(--lo) var(--lo) #fff;background:inherit;box-shadow:1px 1px 0 var(--lo)}
.inch{width:78px;height:30px;background:var(--teal);border-left:2px solid #000;padding:2px;font-family:"Liberation Serif",serif}
.status{height:38px;background:var(--cream);padding:1px 1px 7px 2px}
.status p{height:30px;border:1px solid #000;background:#b3ffff;box-shadow:inset -3px -3px 0 #5f9090,inset 3px 3px 0 #d8ffff;text-align:center;font-size:12px;line-height:28px}
.taskbar{height:19px;overflow:hidden;background:#101010;color:#eee;font:13px/20px var(--ui)}
.tasks{height:40px;display:flex;align-items:center}
.tasks button{width:98px;height:40px;display:flex;align-items:center;gap:6px;padding:0 6px;white-space:nowrap;overflow:hidden}
.tasks .start{width:51px;padding-left:15px}
.tasks .cur{background:#303030}
.tray{display:flex;gap:10px;align-items:center;margin-left:10px;flex:1}
.tasks time{align-self:flex-start;margin-right:34px}
.note{margin-right:22px}

.results{position:absolute;left:102px;top:303px;width:495px;height:763px;display:flex;flex-direction:column;background:#fff;box-shadow:2px 3px 9px #0008}
.results>header{height:29px;display:flex;align-items:center;gap:6px;padding:0 9px 0 8px}
.rbody{flex:1;background:#000;border:1px solid #000;display:flex;flex-direction:column;gap:1px;min-height:0}
.banner{background:var(--aqua);padding:2px;display:flex;height:29px}
.mbtn.teal{flex:1;background:var(--teal);font:bold 14px/18px "Liberation Serif",serif}
.cols{flex:1;display:flex;gap:3px;min-height:0}
.colL{width:169px;display:flex;flex-direction:column;background:var(--teal)}
.colR{flex:1;display:flex;flex-direction:column;background:var(--teal);min-width:0}
.hd{height:32px;background:var(--aqua);border-bottom:2px solid #000;display:flex;align-items:stretch;padding:1px;font-size:15px}
.it{font-style:italic;font-weight:normal;width:48px;outline:1px solid #54cfb0}
.it:last-child{width:39px}
.hd b{flex:1;text-align:center;font-style:italic;line-height:28px;border:solid #000;border-width:0 1px;margin:0 1px}
.cat{width:206px;font-style:italic}
.colR .hd label{line-height:30px;padding-left:1px;width:52px}
.colR .hd .opt{flex:1}
.scroll{flex:1;display:flex;gap:3px;padding:1px 2px 0 1px;min-height:0}
.list{flex:1;border:2px solid;border-color:var(--tlo) var(--thi) var(--thi) var(--tlo);padding:2px 3px 0 2px;white-space:nowrap}
.list li{height:15px;line-height:15px;margin-bottom:3px}
.colR .list{margin-right:1px;padding-left:1px}
.list .sel{background:#000;color:var(--teal)}
.colL .list .sel{margin-right:1px}
.vs{width:14px;border:2px solid;border-color:var(--tlo) var(--thi) var(--thi) var(--tlo);display:flex;flex-direction:column}
.up,.dn,.lf,.rt{width:10px;height:12px;background:var(--thi);clip-path:polygon(50% 0,100% 100%,0 100%);flex:none}
.dn{clip-path:polygon(0 0,100% 0,50% 100%);background:#2c8f76}
.lf,.rt{width:12px;height:9px;clip-path:polygon(0 50%,100% 0,100% 100%)}
.rt{clip-path:polygon(0 0,100% 50%,0 100%);background:#2c8f76}
.bar{flex:1;border:2px solid;border-color:var(--thi) var(--tlo) var(--tlo) var(--thi)}
.gapbar{height:84px;background:#45ad93}
.hs{height:14px;margin:6px 18px 2px 1px;border:2px solid;border-color:var(--tlo) var(--thi) var(--thi) var(--tlo);display:flex}
.rep{height:32px;border:1px solid #000;background:var(--aqua);padding:2px 2px 2px 4px;display:flex}
.rep .opt{flex:1}
.navrow{height:25px;display:flex;align-items:center;gap:5px;padding:0 2px 0 1px;margin-top:1px}
.navrow .mbtn{height:23px;width:43px;text-align:center}
.navrow .mbtn:first-child{width:52px}
.navrow input{flex:1;min-width:0;height:23px;border:2px solid;border-color:var(--tlo) var(--thi) var(--thi) var(--tlo);border-left-width:3px;padding-left:2px}
.zoomrow{height:32px;display:flex;margin-top:2px}
.zoomrow>*{border:1px solid #000;background:var(--aqua);line-height:30px}
.az{width:125px;padding:2px 2px 2px 5px}
.zoomrow>.sv{width:69px;background:#1ae81a;padding:1px 1px 1px 6px;border-left:0}
.zoomrow>label[for]{border-right:0;border-left:0;width:28px}
.zoomrow>.show{border:0;background:none;display:flex;align-items:center;gap:3px;padding-left:4px;height:28px}
.show input{width:13px;height:13px;border:1px solid;border-color:var(--thi) var(--tlo) var(--tlo) var(--thi)}
.undo{height:35px;display:flex;gap:4px;justify-content:flex-end;padding:3px 1px 0}
.ic{position:relative;width:30px;height:30px;display:flex;flex-direction:column;align-items:center;justify-content:center}
.ic span{font:11px/12px "Liberation Serif",serif;margin:0 -4px}
.undo .ic span{font-size:10px}
.undo .ic:last-child{width:36px}
.undo .ic::before{content:"";position:absolute;inset:1px 2px;border:1px solid #000}
.info,.erf{height:20px;background:var(--teal);text-align:center;line-height:22px}
.erf{background:var(--cream);text-align:left;padding-left:2px}
.foot{height:34px;background:var(--aqua);display:flex;gap:4px;padding:1px 1px 2px}
.foot .close{flex:1}
.foot .over{position:absolute;left:2px;top:1px}
.ic .over.num{font:bold 12px/18px "Liberation Sans",sans-serif;left:6px;margin:0;top:2px}

.excel{position:absolute;left:1104px;right:0;top:43px;bottom:88px;min-width:700px;display:flex;flex-direction:column;background:#fff;box-shadow:0 3px 14px #0008;font:15px/20px var(--ui);overflow:hidden;border-left:1px solid #cfe0f4}
.excel h2,.excel h3{font-weight:normal}
.excel button{white-space:nowrap}
.xt{height:34px;display:flex;align-items:center;gap:8px;position:relative;padding-left:47px}
.xt h2{position:absolute;left:736px;white-space:nowrap;font-size:15px;color:#111}
.orb{position:absolute;left:2px;top:8px;z-index:2}
.qat{width:74px;height:26px;margin-top:4px;border:1px solid #b9bcc4;border-left-color:#ddd;border-radius:4px 13px 13px 0;background:#fbfcfe;display:flex;gap:11px;align-items:center;padding-left:18px}
.tabs{height:30px;background:#bfdbff;display:flex;padding:2px 0 0 58px;gap:4px;color:#15428b}
.tabs button{padding:0 12px;border:1px solid transparent;border-bottom:0;height:28px;line-height:20px;padding-bottom:3px}
.tabs .on{background:#edf4fd;border-color:#8db2e3;border-radius:4px 4px 0 0}
.ribbon{height:122px;background:#d6e5f7;border:1px solid #8db2e3;border-width:1px 0 2px;padding:2px 0 2px 3px;display:flex;gap:4px;color:var(--blue)}
.rg{flex:none;border:1px solid #a9c3e4;border-radius:3px;background:linear-gradient(#dce7f4 0 12%,#c9daed 13%,#d9e8f8);display:flex;flex-direction:column}
.g1{width:132px}.g2{width:271px}.g3{width:271px}.g4{width:158px}.g5{width:200px}
.rc{flex:1;display:flex;padding:8px 3px 0}
.rc.col,.al,.wm{display:flex;flex-direction:column}
.rc.col{gap:12px;padding-top:12px}
.rg h3{height:22px;background:#c2d9f1;text-align:center;color:#3e6db5;font-size:15px;line-height:20px;position:relative}
.la{position:absolute;right:4px;top:4px;width:12px;height:12px}
.big{width:52px;display:flex;flex-direction:column;align-items:center;line-height:22px;gap:4px}
.dd{width:16px;height:100%;display:flex;align-items:center;justify-content:center;flex:none}
.dd::after{content:"";border:3px solid transparent;border-top:4px solid #5a7db0;border-bottom:0}
.big .dd{height:8px}
.g1 .rc{gap:6px;padding-left:1px}
.clip{display:flex;flex-direction:column;gap:4px;margin-top:-6px}
.clip button{height:22px;display:flex;align-items:center;gap:4px}
.row{display:flex;gap:3px;height:26px}
.col .row:first-child{height:29px}
.xs{position:relative;background:#ebf3fc;border:1px solid #b0c9e6;color:#111;display:flex}
.xs+.xs{margin-left:-1px}
.xs select{width:100%;padding-left:2px}
.xs::after{content:"";position:absolute;right:5px;top:12px;border:3px solid transparent;border-top:4px solid #5a7db0;border-bottom:0}
.w150{width:150px}.w56{width:57px}
.bg{display:flex;border:1px solid #93b1d8;border-radius:2px;height:26px;background:linear-gradient(#d7e4f3,#c5d7ee 45%,#d3e2f5)}
.bg button{width:26px;display:grid;place-items:center;position:relative;color:#111;border-right:1px solid #b4c9e4}
.bg .dd{width:13px}
.sf{font:bold 16px/20px "Liberation Serif",serif}
.sf.sm{font-size:13px}
.sf sup{position:absolute;right:2px;top:-4px;font-size:10px;color:#3a6ab8}
.itl{font-style:italic}
.fc span{font:bold 16px/16px "Liberation Serif",serif;color:#2c4f8c;border-bottom:4px solid #f00;width:20px}
.bg .wen{font-size:14px;line-height:11px;color:#2456b8}
.wen small{font:bold 9px/8px var(--ui);color:#222}
.g3 .rc{padding-top:14px}
.al{gap:13px;border-right:2px solid #9dbbe0;padding-right:4px;width:145px;margin-top:-1px;height:66px}
.hot{background:linear-gradient(#fbd28a,#ffae3c 50%,#ffe07a)}
.lv{width:14px;height:7px}
.lv.t{margin-bottom:8px}.lv.b{margin-top:8px}
.bg .ab{font:italic bold 12px/14px "Liberation Sans",sans-serif;rotate:-30deg;border:0}
.wm{gap:13px;margin-left:3px}
.hb{height:26px;display:flex;align-items:center;align-self:flex-start;border:1px solid #b98d4e;background:linear-gradient(#f8cd95,#fdb35a 50%,#ffe092);border-radius:2px;color:#3b4f7c;padding:0 3px}
button.hb,.hb button{gap:5px;display:flex;align-items:center}
span.hb{padding-right:0}
.hb .dd{border-left:1px solid #c99b5c;width:14px;margin-left:1px}
.bg .dec{font:bold 9px/10px "Liberation Sans",sans-serif}
.g4 .bg button{width:28px}
.g4 .bg .dec{width:26px}
.g5 .rc{padding-left:2px;gap:2px}
.g5 .big{width:64px}
.g5 .fmt{line-height:20px}
.fbar{height:22px;border:1px solid #7c9cc6;border-width:1px 0;display:flex;font-family:var(--song);color:#111;margin-bottom:2px}
.nb{width:138px;text-align:center}
.blk{width:20px}.blk::after{border-top-color:#111;border-left-width:4px;border-right-width:4px;border-top-width:5px}
.fx{width:77px;background:linear-gradient(#e4eefa,#b9cfea);border-right:1px solid #7c9cc6;border-radius:10px 0 0 10px;font:italic bold 14px/19px "Liberation Serif",serif;text-align:right;padding-right:5px;position:relative;color:#444}
.knob{position:absolute;left:4px;top:4px;width:11px;height:11px;border-radius:6px;background:#c3d2e8;box-shadow:inset 1px 1px 2px #7f97bb}
.fi{flex:1;padding-left:13px;min-width:0}
.grid{flex:1;overflow:hidden;min-height:0;border-top:1px solid #7c9cc6}
table{table-layout:fixed;width:100%;min-width:942px;border-collapse:separate;border-spacing:0}
.c0{width:34px}.ca{width:58px}.cb{width:37px}.cc{width:195px}.cd{width:88px}.ce{width:103px}.cf{width:89px}.cg{width:58px}.ch{width:87px}
th{font:15px/16px var(--song);color:#26323f;padding:0;background:#e4ecf7;border:solid #9eb6ce;border-width:0 1px 1px 0;vertical-align:bottom}
thead th{height:20px;background:linear-gradient(#f7fafd,#d5dee9);vertical-align:middle}
.corner{background:#a9c4e9}
.corner::after{content:"";display:block;width:9px;height:9px;margin:2px 4px 0 auto;background:#e2ebf6;clip-path:polygon(100% 0,100% 100%,0 100%)}
th.cur{background:#ffd58d;border-color:#f29536}
td{padding:0 2px;border:solid #000;border-width:0 0 1px;font:13px/19px "Noto Sans CJK SC",sans-serif;white-space:nowrap;position:relative}
td.n,td.mg,td.proc{border-right-width:1px;text-align:center}
td.n{font:600 17px/20px "Open Sans",sans-serif}
td.mg,td.proc{font-size:16px;line-height:24px}
td.proc{line-height:21px}
td.mg i{font-family:"Open Sans",sans-serif;font-weight:600}
td.os{font-family:"Liberation Sans","Noto Sans CJK SC",sans-serif}
td s{text-decoration:none;font:12px/14px "Liberation Mono",monospace}
td em{font-style:normal;color:#c81414}
td.red{color:#f01818}
.cut{position:relative}
.cut::after{content:"";position:absolute;left:-2px;right:-7px;top:10px;height:2px;background:#000}
.r44{height:44px}.r45{height:45px}.r55{height:55px}.r53{height:53px}.r33{height:33px}
.hl{position:absolute;left:-46px;top:-8px;width:422px;height:54px;border:4px solid #ffff1e;box-shadow:2px 3px 5px #0008,inset 2px 3px 5px #0006;z-index:3}
.sheets{height:17px;background:linear-gradient(#cfe0f6,#e6effb);border-bottom:1px solid #5f86ba;display:flex;font:15px/16px var(--song);overflow:hidden}
.nav{width:63px;flex:none;border-right:1px solid #9eb6ce}
.sheets a{color:#1b3a78;text-decoration:none;flex:none;text-align:center;position:relative;height:16px}
.sheets .on{background:#fff;color:#111;width:44px}
.sheets .fig{width:79px}
.sheets .sh{width:65px}
.sheets a::after{content:"";position:absolute;right:0;top:0;height:16px;border-right:1px solid #5f86ba;transform:skewX(-28deg)}
.xstat{height:27px;background:linear-gradient(#e3eefb,#c4dbf8 30%,#b4cdf0 60%,#d8e8fa);border-top:2px solid #c9dcf4;display:flex}
.xstat span{padding:1px 8px 0 7px;border-right:2px solid #e8f1fc;color:var(--blue)}
.arrow{position:absolute;left:904px;top:976px}
```
